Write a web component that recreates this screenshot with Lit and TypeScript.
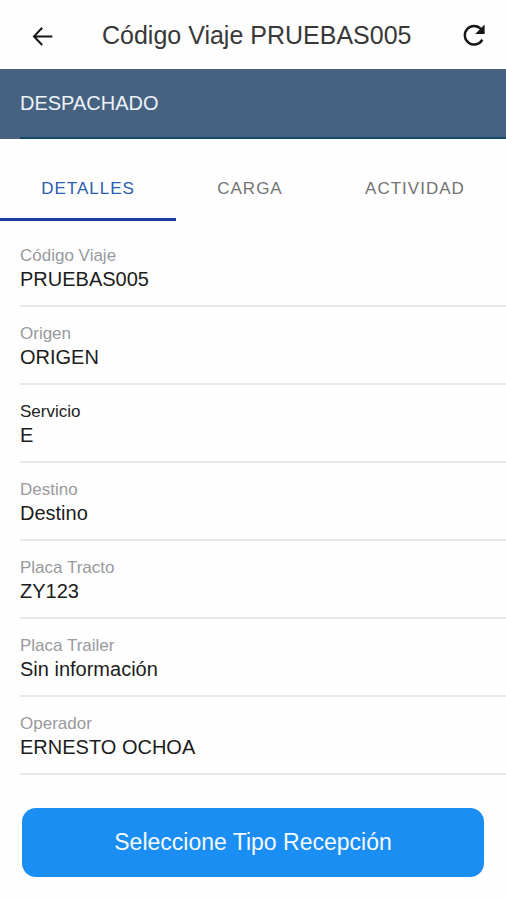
import { LitElement, html, css } from "lit";
import { customElement, state } from "lit/decorators.js";
import { classMap } from "lit/directives/class-map.js";

interface Field {
  label: string;
  value: string;
  strong?: boolean;
}

const TABS = ["DETALLES", "CARGA", "ACTIVIDAD"];

const FIELDS: Field[] = [
  { label: "Código Viaje", value: "PRUEBAS005" },
  { label: "Origen", value: "ORIGEN" },
  { label: "Servicio", value: "E", strong: true },
  { label: "Destino", value: "Destino" },
  { label: "Placa Tracto", value: "ZY123" },
  { label: "Placa Trailer", value: "Sin información" },
  { label: "Operador", value: "ERNESTO OCHOA" },
];

@customElement("app-root")
export class AppRoot extends LitElement {
  @state() private active = 0;

  static styles = css`
    :host {
      display: block;
      min-height: 100vh;
      background: #fefefe;
      color: #1c1c1c;
      font-family: "Liberation Sans", Arial, sans-serif;
    }
    * {
      box-sizing: border-box;
    }
    button {
      margin: 0;
      padding: 0;
      border: 0;
      background: none;
      color: inherit;
      font-family: inherit;
      cursor: pointer;
    }
    .toolbar {
      display: flex;
      align-items: center;
      height: 69px;
      padding: 0 20px;
    }
    .title {
      flex: 1;
      margin: 0 0 0 38px;
      font-size: 25px;
      line-height: 32px;
      font-weight: 400;
      color: #383838;
      white-space: nowrap;
    }
    .icon-button {
      display: flex;
      flex: none;
      padding: 0 10px;
    }
    .icon-button.end {
      padding: 0;
    }
    .icon {
      display: block;
      width: 24px;
      height: 24px;
    }
    .status {
      display: flex;
      flex-direction: column;
      padding-left: 20px;
      background: #466280;
      color: #edf3fa;
    }
    .status-text {
      padding: 22px 0;
      border-bottom: 2px solid #164669;
      font-size: 20px;
      line-height: 24px;
    }
    .tabs {
      display: flex;
      height: 82px;
      padding-top: 20px;
    }
    .tab {
      flex: 1 1 auto;
      padding: 0 39px;
      border-bottom: 3px solid transparent;
      font-size: 17px;
      line-height: 24px;
      letter-spacing: 1px;
      color: #737373;
    }
    .tab.active {
      border-bottom-color: #1c3d9e;
      color: #2b5db0;
    }
    .fields {
      margin: 0;
      padding: 8px 0 0 20px;
    }
    .field {
      padding: 15px 0;
      border-bottom: 2px solid #e8e8e8;
    }
    .label {
      font-size: 17px;
      line-height: 24px;
      color: #989a9d;
    }
    .label.strong {
      color: #222222;
    }
    .value {
      margin: 0;
      font-size: 20px;
      line-height: 22px;
    }
    .actions {
      padding: 33px 22px 23px;
    }
    .primary {
      display: block;
      width: 100%;
      padding: 20px;
      border-radius: 14px;
      background: #1a8ef2;
      color: #f4faff;
      font-size: 23px;
      line-height: 29px;
    }
  `;

  render() {
    return html`
      <header class="toolbar">
        <button class="icon-button" aria-label="Volver">
          <svg class="icon" viewBox="0 0 24 24" fill="none" stroke="#161616" stroke-width="2">
            <path d="M12.2 4.8 4 13.4l8.2 8.6M4.2 13.4H22.3" />
          </svg>
        </button>
        <h1 class="title">Código Viaje PRUEBAS005</h1>
        <button class="icon-button end" aria-label="Actualizar">
          <svg class="icon" viewBox="0 0 24 24">
            <path d="M20.3 16.6A9.3 9.3 0 1 1 18.9 5.9" fill="none" stroke="#161616" stroke-width="2.4" />
            <path d="M22.6 1.6V11H13.2z" fill="#161616" />
          </svg>
        </button>
      </header>
      <div class="status"><div class="status-text">DESPACHADO</div></div>
      <nav class="tabs" role="tablist">
        ${TABS.map(
          (name, i) => html`<button
            role="tab"
            aria-selected=${i === this.active ? "true" : "false"}
            class=${classMap({ tab: true, active: i === this.active })}
            @click=${() => (this.active = i)}
          >${name}</button>`
        )}
      </nav>
      <dl class="fields">
        ${FIELDS.map(
          (f) => html`<div class="field">
            <dt class=${classMap({ label: true, strong: !!f.strong })}>${f.label}</dt>
            <dd class="value">${f.value}</dd>
          </div>`
        )}
      </dl>
      <div class="actions">
        <button class="primary">Seleccione Tipo Recepción</button>
      </div>
    `;
  }
}
